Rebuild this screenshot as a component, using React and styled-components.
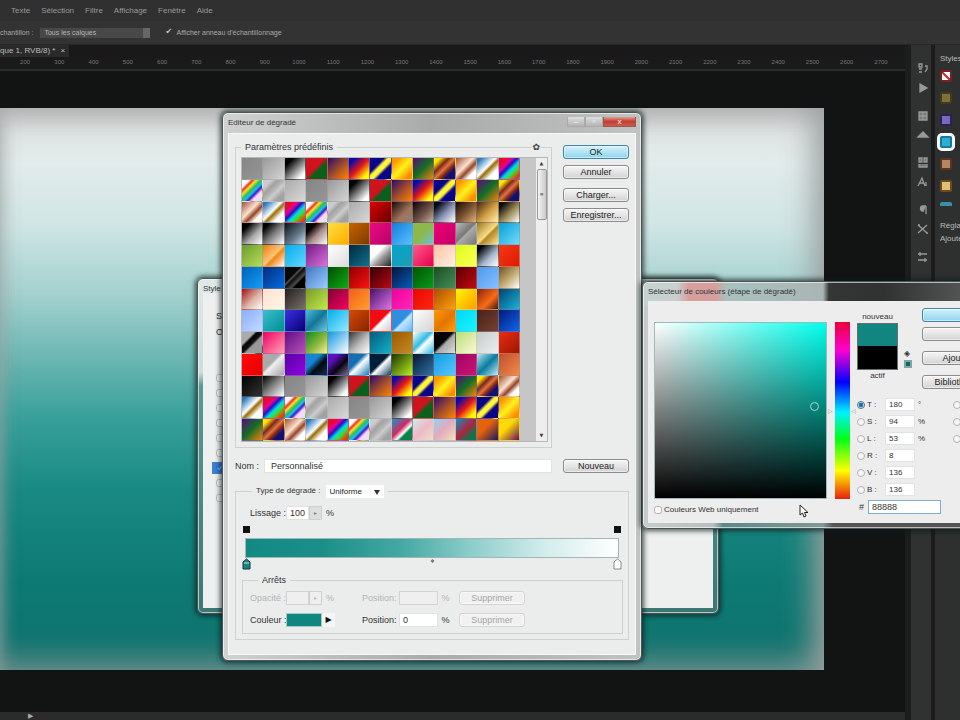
import React, { Component } from 'react'
import styled, { createGlobalStyle } from 'styled-components'

const GlobalStyle = createGlobalStyle`
    * {
        box-sizing: border-box;
    }
    body {
        margin: 0;
        background: #131514;
        overflow: hidden;
    }
    body, button, input, select {
        font-family: "Liberation Sans", Arial, sans-serif;
        font-size: 9px;
        line-height: 12px;
    }
`

/* ---------- application shell ---------- */

const Shell = styled.div`
    position: relative;
    display: flex;
    flex-direction: column;
    height: 100vh;
    overflow: hidden;
    color: #a9a9a9;
`

const MenuBar = styled.nav`
    display: flex;
    gap: 11px;
    height: 21px;
    padding: 5px 11px;
    background: #303030;
    font-size: 8px;
    a {
        color: #999;
        text-decoration: none;
    }
`

const OptionsBar = styled.div`
    display: flex;
    align-items: center;
    height: 24px;
    background: #333;
    border-bottom: 1px solid #262626;
    font-size: 7px;
    white-space: nowrap;
`

const SampleLabel = styled.label`
    display: flex;
    align-items: center;
    gap: 7px;
    font-size: 7px;
`

const DarkSelect = styled.select`
    appearance: none;
    width: 110px;
    height: 10px;
    padding: 0 4px;
    border: 0;
    background: linear-gradient(90deg, #484848 94%, #666 94%);
    color: #b5b5b5;
    font-size: 7px;
    line-height: 10px;
`

const RingLabel = styled.label`
    display: flex;
    align-items: center;
    gap: 3px;
    margin-left: 15px;
`

const RingCheck = styled.input`
    appearance: none;
    width: 8px;
    height: 10px;
    margin: 0;
    &:checked::before {
        content: "✔";
        display: block;
        color: #c5c5c5;
        font-family: "DejaVu Sans", sans-serif;
        font-size: 8px;
        line-height: 8px;
    }
`

const Work = styled.div`
    display: flex;
    flex: 1;
    min-height: 0;
`

const Document = styled.main`
    display: flex;
    flex-direction: column;
    flex: 1;
    min-width: 0;
`

const TabRow = styled.div`
    display: flex;
    height: 12px;
    background: #191919;
`

const Tab = styled.div`
    display: flex;
    gap: 5px;
    padding-right: 4px;
    background: #2a2a2a;
    color: #bbb;
    font-size: 8px;
    white-space: nowrap;
`

const Ruler = styled.div`
    display: flex;
    height: 14px;
    padding: 0 7px 0 8px;
    background: #1a1a1a;
    border-bottom: 2px solid #2c2b2b;
    color: #777;
    font-size: 6px;
    span {
        flex: 1;
        text-align: center;
        line-height: 10px;
    }
`

const Stage = styled.div`
    flex: 1;
    min-height: 0;
    padding: 37px 81px 42px 0;
    background: #121414;
`

const Artwork = styled.div`
    height: 100%;
    background: linear-gradient(180deg, #dedfdf 0, #e3ebeb 10%, #cfe5e4 21%, #9fcfcc 34%, #69b5b1 45%, #39a09a 55%, #198a83 68%, #0e7a74 84%, #0f716c 100%);
    box-shadow: inset -26px 0 28px -12px rgba(155, 160, 160, 0.8), inset 0 22px 26px -12px #b0b0b0,
        inset 0 -26px 28px -12px rgba(115, 145, 143, 0.75), inset 14px 0 18px -14px rgba(160, 160, 160, 0.7);
`

const StatusBar = styled.div`
    height: 8px;
    padding-left: 28px;
    background: #2b2b2b;
    color: #aaa;
    font-size: 7px;
    line-height: 8px;
`

const IconStrip = styled.aside`
    display: flex;
    flex-direction: column;
    align-items: center;
    width: 30px;
    padding: 17px 0 0 4px;
    border-left: 6px solid #1c1d1d;
    border-right: 4px solid #1c1c1c;
    background: #303131;
    svg {
        width: 14px;
        height: 14px;
        margin-bottom: 5px;
    }
    svg:nth-child(even) {
        margin-bottom: 14px;
    }
`

const StylePanel = styled.aside`
    width: 25px;
    padding: 8px 0 0 5px;
    background: #2e2f2f;
    color: #bbb;
    font-size: 8px;
    line-height: 11px;
    white-space: nowrap;
    overflow: hidden;
`

const StyleTiles = styled.div`
    display: flex;
    flex-direction: column;
    gap: 10px;
    margin: 6px 0;
`

const StyleTile = styled.div`
    width: 12px;
    height: 12px;
    border: ${p => (p.$rim ? `2px solid ${p.$rim}` : 0)};
    background: ${p => p.$fill};
    outline: ${p => (p.$on ? '3px solid #f4fcff' : 0)};
    border-radius: 2px;
`

const PanelNote = styled.div`
    margin-top: ${p => p.$gap || 0}px;
`

/* ---------- windows ---------- */

const Frame = styled.section`
    position: absolute;
    left: ${p => p.$left}px;
    top: ${p => p.$top}px;
    width: ${p => p.$width}px;
    border: 1px solid #4c5554;
    border-radius: 6px;
    background: ${p => p.$skin};
    box-shadow: inset 0 0 0 1px rgba(255, 255, 255, 0.6), 0 0 5px 2px rgba(10, 25, 24, 0.7);
    padding: 0 5px 5px;
    color: #333;
    white-space: nowrap;
`

const TitleBar = styled.header`
    display: flex;
    justify-content: space-between;
    height: ${p => p.$height}px;
    padding-top: 4px;
    h2 {
        margin: 0;
        font-size: 8px;
        font-weight: normal;
        line-height: 12px;
    }
`

const Caption = styled.div`
    display: flex;
    height: 10px;
    button {
        width: 18px;
        padding: 0;
        border: 1px solid #aaa;
        border-top: 0;
        background: linear-gradient(#ddd, #b5b5b5);
        color: #fff;
        font-size: 8px;
        line-height: 8px;
    }
    button:last-child {
        width: 33px;
        background: linear-gradient(#dc9c94, #c33d31 50%, #cf5a4b);
        border-color: #9a5a54;
    }
`

const Button = styled.button`
    display: block;
    width: 100%;
    height: 14px;
    margin-top: ${p => p.$gap || 0}px;
    padding: 0;
    border: 1px solid ${p => (p.$primary ? '#3f87a1' : '#8c8c8c')};
    border-radius: 3px;
    background: ${p => (p.$primary ? 'linear-gradient(#d5f1fb, #8fd4ec)' : 'linear-gradient(#f6f6f6, #d3d3d3)')};
    box-shadow: inset 0 0 0 1px rgba(255, 255, 255, 0.5);
    color: #222;
    line-height: 11px;
    &:disabled {
        border-color: #d4d4d4;
        background: #f1f1f1;
        color: #a5a5a5;
    }
`

const Field = styled.input`
    width: ${p => p.$width}px;
    height: ${p => p.$height || 14}px;
    padding: 0 ${p => p.$pad || 3}px;
    border: 1px solid #e0e3e3;
    background: #fff;
    color: #333;
    &:disabled {
        border-color: #d2d2d2;
        background: #efefef;
    }
`

const Group = styled.fieldset`
    position: relative;
    min-width: 0;
    margin: ${p => p.$margin || 0};
    padding: ${p => p.$padding};
    border: 1px solid #cfd0d0;
`

const Legend = styled.legend`
    display: flex;
    height: 12px;
    margin-left: ${p => p.$indent || 0}px;
    padding: 0 4px;
    line-height: 12px;
    label {
        font-size: 8px;
    }
`

const EditorBody = styled.div`
    padding: 7px 6px 14px;
    background: #ebecec;
    border: 1px solid #f8f8f8;
`

const Columns = styled.div`
    display: flex;
    gap: 11px;
    > :first-child {
        flex: 1;
    }
    > :last-child {
        width: 66px;
    }
`

const ButtonStack = styled.div`
    padding-top: 4px;
`

const Gear = styled.button`
    position: absolute;
    right: 11px;
    top: -12px;
    padding: 0;
    border: 0;
    background: #ebecec;
    color: #444;
    font-family: "DejaVu Sans", sans-serif;
    font-size: 9px;
`

const PresetBox = styled.div`
    display: flex;
    height: 285px;
    border: 1px solid #b7b7b7;
    background: #c6c6c6;
`

const Swatches = styled.div`
    display: grid;
    grid-template-columns: repeat(13, 1fr);
    grid-template-rows: repeat(13, 1fr);
    width: 278px;
`

const Swatch = styled.div`
    border-right: 1px solid rgba(190, 190, 190, 0.4);
    border-bottom: 1px solid rgba(190, 190, 190, 0.4);
    background: ${p => `linear-gradient(135deg, ${p.$stops})`};
`

const Scroll = styled.div`
    display: flex;
    flex-direction: column;
    align-items: center;
    width: 11px;
    margin-left: auto;
    background: #eee;
    color: #444;
    font-family: "DejaVu Sans", sans-serif;
    font-size: 5px;
    line-height: 11px;
    span:last-child {
        margin-top: auto;
    }
`

const Thumb = styled.div`
    width: 10px;
    height: 51px;
    border: 1px solid #999;
    border-radius: 2px;
    background: linear-gradient(90deg, #f4f4f4, #c8c8c8);
    text-align: center;
    line-height: 48px;
`

const NameRow = styled.div`
    display: flex;
    align-items: center;
    margin-top: 11px;
    label {
        width: 29px;
    }
    input {
        flex: 1;
    }
    div {
        width: 66px;
        margin-left: 11px;
    }
`

const LightSelect = styled.select`
    appearance: none;
    width: 58px;
    height: 13px;
    margin-left: 5px;
    padding: 0 4px;
    border: 0;
    background: #fff url("data:image/svg+xml,%3Csvg xmlns='http://www.w3.org/2000/svg' width='6' height='5'%3E%3Cpath d='M0 0h6L3 5z' fill='%23333'/%3E%3C/svg%3E") no-repeat 48px 5px;
    color: #222;
    font-size: 8px;
`

const SmoothRow = styled.div`
    display: flex;
    align-items: center;
    height: 14px;
    margin: 0 8px 5px;
    label {
        width: 36px;
    }
`

const Stepper = styled.button`
    width: 13px;
    height: 14px;
    margin-right: 4px;
    padding: 0;
    border: 1px solid #cfcfcf;
    background: #dedede;
    color: ${p => (p.disabled ? '#bbb' : '#888')};
    font-size: 6px;
    &:disabled {
        background: #efefef;
    }
`

const StopRow = styled.div`
    display: flex;
    justify-content: space-between;
    height: ${p => p.$height}px;
    margin: 0 1px 0 0;
    svg {
        width: 9px;
        height: 12px;
    }
`

const Ramp = styled.div`
    height: 20px;
    margin: 0 4px 0 3px;
    border: 1px solid #a3b5b4;
    background: linear-gradient(90deg, #128a84, #1b8e88 20%, #45a9a3 42%, #8accc9 60%, #d2eceb 80%, #fff);
`

const StopGrid = styled.div`
    display: grid;
    grid-template-columns: 36px 76px 37px 40px 20px 66px;
    grid-auto-rows: 14px;
    row-gap: 8px;
    align-items: center;
`

const Inline = styled.div`
    display: flex;
    align-items: center;
`

const Tag = styled.label`
    color: ${p => (p.$dim ? '#b4b4b4' : '#333')};
`

const ColorWell = styled.button`
    width: 36px;
    height: 14px;
    padding: 0;
    border: 1px solid #a7cbc9;
    background: #118680;
`

const Flyout = styled.button`
    width: 13px;
    height: 14px;
    padding: 0;
    border: 0;
    background: #f5f5f5;
    color: #111;
    font-family: "DejaVu Sans", sans-serif;
    font-size: 8px;
`

/* ---------- layer style window ---------- */

const StyleBody = styled.div`
    height: 315px;
    padding: 17px 11px 0 13px;
    background: #eeefef;
`

const BlendOptions = styled.div`
    margin-top: 4px;
`

const Effects = styled.div`
    display: flex;
    flex-direction: column;
    gap: 3px;
    margin-top: 34px;
    label {
        display: flex;
        gap: 8px;
        height: 12px;
    }
    input {
        width: 8px;
        height: 8px;
        margin: 2px 0;
        opacity: 0.4;
    }
    label:nth-child(7) {
        margin-left: -4px;
        padding-left: 4px;
        background: #3f7fcf;
        color: #fff;
    }
`

/* ---------- colour picker ---------- */

const PickerBody = styled.div`
    display: flex;
    height: 222px;
    padding: 7px 6px 0;
    background: #ecedec;
`

const FieldColumn = styled.div`
    width: 173px;
    padding-top: 14px;
    label {
        display: flex;
        align-items: center;
        gap: 2px;
        margin-top: 5px;
        font-size: 8px;
    }
    label input {
        width: 8px;
        height: 8px;
        margin: 0;
        opacity: 0.5;
    }
`

const ColorField = styled.div`
    position: relative;
    height: 177px;
    border: 1px solid #9bb;
    background: linear-gradient(180deg, transparent, #000), linear-gradient(90deg, #fff, #00ffec);
`

const Marker = styled.div`
    position: absolute;
    left: 155px;
    top: 79px;
    width: 9px;
    height: 9px;
    border: 1px solid #a5d6d3;
    border-radius: 50%;
`

const Hue = styled.div`
    display: flex;
    align-items: center;
    justify-content: space-between;
    width: 28px;
    height: 177px;
    margin: 14px 0 0 1px;
    color: #999;
    font-size: 6px;
`

const HueBar = styled.div`
    width: 15px;
    height: 177px;
    background: linear-gradient(#e8003a, #ff00d0 16%, #0000ff 34%, #00f0ff 51%, #00ff18 66%, #ffff00 84%, #e8200c);
`

const Values = styled.div`
    padding-left: 1px;
    flex: 1;
`

const PickerTop = styled.div`
    display: flex;
    height: 90px;
`

const Compare = styled.div`
    width: 41px;
    padding-top: 3px;
    font-size: 8px;
    text-align: center;
    div {
        height: 47px;
        background: linear-gradient(#118680 48%, #000 48%);
        border: 1px solid #676f6e;
    }
`

const Gamut = styled.div`
    width: 24px;
    padding: 41px 7px 0 6px;
    font-family: "DejaVu Sans", sans-serif;
    font-size: 8px;
    line-height: 9px;
    div {
        width: 8px;
        height: 8px;
        margin-top: 2px;
        border: 2px solid #7ba9a7;
        background: #17615e;
    }
`

const PickerButtons = styled.div`
    width: 128px;
`

const ValueGrid = styled.div`
    display: grid;
    grid-template-columns: 10px 18px 30px 38px 14px 60px;
    grid-auto-rows: 13px;
    row-gap: 4px;
    align-items: center;
    font-size: 8px;
    input {
        font-size: 8px;
    }
    input[type="radio"] {
        width: 8px;
        height: 8px;
        margin: 0;
        accent-color: #2f6f9b;
    }
    input[type="radio"]:not(:checked) {
        opacity: 0.5;
    }
    span {
        padding-left: 3px;
    }
`

const HexRow = styled.label`
    display: flex;
    align-items: center;
    gap: 4px;
    margin-top: 4px;
    padding-left: 2px;
    input {
        border-color: #7fb0c8;
    }
`

const Pointer = styled.svg`
    position: absolute;
    left: 799px;
    top: 504px;
    width: 10px;
    height: 14px;
`

/* Gradient presets by name: the default set repeats through the list */
const G = {
    gy: '#858585, #969696',
    lg: '#999, #d4d4d4',
    bw: '#000 20%, #fff 85%',
    rg: '#d0121d 45%, #08601b 60%',
    vo: '#2c086c, #a85028 55%, #ff8500',
    bry: '#0909a8 15%, #e61717 50%, #ffff00 85%',
    byb: '#0a0588 34%, #fff53b 44%, #fff53b 56%, #0a0588 66%',
    oyo: '#ff9400 15%, #fff31c 50%, #ff8b00 85%',
    vgo: '#5c087e, #136e25 50%, #ff7d08',
    yvo: '#ffe500 15%, #7d281e 35%, #de7640 50%, #892714 63%, #111173 75%',
    cop: '#9c5033, #ffe1cf 42%, #954627 60%, #fff 78%',
    chr: '#2879bd 10%, #fff 45%, #9b6b05 55%, #fff 75%',
    spe: '#f0052d 20%, #e3009b 33%, #2312c2 45%, #00d9f0 58%, #37e136 70%, #f33a00 90%',
    rai: '#fff 18%, #f42b20 26%, #ffdf22 35%, #1fc25c 47%, #1fbded 56%, #391cc4 65%, #f7d9ff 75%',
    str: '#ccc 20%, #a2a2a2 35%, #b5b5b5 50%, #ccc 60%, #a2a2a2 80%',
}

const presets = [
    [G.gy, G.lg, G.bw, G.rg, G.vo, G.bry, G.byb, G.oyo, G.vgo, G.yvo, G.cop, G.chr, G.spe],
    [G.rai, G.str, '#aaa, #d8d8d8', G.gy, G.lg, G.bw, G.rg, G.vo, G.bry, G.byb, G.oyo, G.vgo, G.yvo],
    [G.cop, G.chr, G.spe, G.rai, G.str, '#aaa, #d8d8d8', '#e00000, #660000', '#150a05, #a1745b 60%, #8c8073', '#090303, #76584e 60%, #c3b1a8', '#020717 15%, #8993b1 55%, #fff', '#150800, #775031 50%, #e4b277', '#462307, #d5a348 55%, #fff0b5', '#0c0c0a 15%, #9a8a58 55%, #fff'],
    ['#000 20%, #aaa 60%, #fff', '#000 15%, #777 50%, #fff', '#071018, #65798a 60%, #cde0ed', '#0b0000 25%, #aa8c8c 55%, #fff', '#ffe03c, #ffad00', '#c96200, #7d3c00', '#f00787, #b50565', '#107ddc, #5bc0ff', '#8bba4a 50%, #6ebde4', '#f00076, #c30067', '#bbb, #777 47%, #aaa 52%, #777', '#9e7524, #f8dc82 50%, #b18628 58%, #ffe99b', '#00a0db, #75daf8'],
    ['#6d9c28, #b6dc5e', '#e77b00, #ffc47c 50%, #f28513 58%, #fff', '#00aeef, #62d4ff', '#731985, #d974dc', '#fff, #ddd', '#00283d, #13718e', '#fff 35%, #999 60%, #222', '#00a4d0, #229cb0', '#ff5b8c, #e8004b', '#ffc0a4, #fff2e2', '#d8ff18, #ffff57', '#000 15%, #a7b8ce 60%, #fff', '#f73818, #de1a00'],
    ['#0060b8, #159cf4', '#062d79, #006be2', '#080808 38%, #555 43%, #0c0c0c 50%, #4b4b4b 66%, #000 72%', '#3f77c6, #9cccff', '#004e00, #0cac16', '#8b0000, #ff1010', '#2d0008, #be0712', '#03143c, #075cba', '#005500, #079819', '#164f25, #488c56', '#580000, #c20713', '#4d99e9, #86bfff', '#6e5024, #bfa66d 50%, #fff'],
    ['#a31010, #ddb4a5 55%, #fff', '#ffe2cf, #fff6e7', '#242020, #787068', '#799d25, #c0ea4c', '#7f0030, #f50060', '#f55e17, #ff9e2a', '#481068, #dc74e7', '#ef009e, #ff27ba', '#e70700, #ff2611', '#a94f00, #ff9f0a', '#fff600, #ff9d00', '#8c1d0c, #fa6d18 60%, #3c1610', '#00446f, #19b2da'],
    ['#8aaeff, #c4dbff', '#3abfd0, #008e94', '#3b30e8, #080070', '#47bddb, #137596 50%, #6acbe2', '#00adeb, #97e9ff', '#d94b06, #852300', '#f20b13 48%, #fff 56%, #cacaca', '#308ee1 50%, #c4e6ff 58%, #65b8f1', '#fff, #d4d4d4', '#ff9a00, #e47400 55%, #ffa000', '#00d5f3, #18f7ff', '#4b211a, #744132', '#001977, #1366ef'],
    ['#aaa 30%, #050505 38%, #111 52%, #999 60%', '#ef0064, #ffa2b5', '#630d85, #b450b8', '#078b20, #89b73c 55%, #fff199', '#1096e3, #fff', '#333, #bbb 55%, #fff', '#065c7d, #10b0ca', '#9b5900, #c78a23', '#fff, #2dbbe5 45%, #fff 58%, #29bae7', '#050505 45%, #aaa 55%, #ddd', '#b5de79, #fff8d6', '#c4cccc, #eee', '#ec2a14, #9a1900'],
    ['#ff0b08, #e60000', '#aaa 40%, #eee 50%, #a5a5a5', '#5c00a8, #8f05de', '#1684d4 35%, #03090f 60%, #172c52', '#5a12bd 25%, #08040d 60%, #77718e', '#126fb2 38%, #fff 53%, #1178b9', '#001e36 45%, #fff 55%, #0d3a57', '#173500, #b9ed22', '#07152e, #2f73aa', '#119dde, #58c6ff', '#9e075d, #cf1178', '#bde7f1, #087ba0 50%, #c9ebf3', '#be4f2c, #f38a4a'],
    ['#000, #333', '#000, #888 50%, #fff', G.gy, G.lg, G.bw, G.rg, G.vo, G.bry, G.byb, G.oyo, G.vgo, G.yvo, G.cop],
    [G.chr, G.spe, G.rai, G.str, '#aaa, #d8d8d8', G.gy, G.lg, G.bw, G.rg, G.vo, G.bry, G.byb, G.oyo],
    [G.vgo, G.yvo, G.cop, G.chr, G.spe, G.rai, G.str, '#1599cf, #ce2a60 45%, #fff 62%, #07834a 70%', '#ccf0e0, #efb8c8 50%, #e5e2c4', '#8fd5ec, #e5a9bf 48%, #eee4b5', '#138eb5, #ac2543 50%, #10734b 78%', '#e7620a 40%, #141963', '#ffda00 40%, #640d65'],
]

const ticks = Array.from({ length: 26 }, (_, i) => (i + 2) * 100)

const effects = ['Biseautage', 'Contour', 'Texture', 'Contour', 'Ombre', 'Lueur', 'Incrustation', 'Satin', 'Motif']

const Icon = ({ children }) => (
    <svg viewBox="0 0 14 14" fill="none" stroke="#999" strokeWidth="1.3">{children}</svg>
)

const DockIcons = () => (
    <IconStrip>
        <Icon><path d="M3 2h3v3H3zM3 7h3M3 10h3M9 4h2v3L9 10" /></Icon>
        <Icon><path d="M4 3l7 4-7 4z" fill="#999" /></Icon>
        <Icon><path d="M3 3h8v8H3zM3 7h8M7 3v8" fill="#777" /></Icon>
        <Icon><path d="M2 9l5-5 5 5zM5 7h4" fill="#999" /></Icon>
        <Icon><path d="M3 2h3v4H3zM8 2h3v4H8zM3 8v3h8V8" fill="#777" /></Icon>
        <Icon><path d="M2 11L6 3l3 8M4 8h4M10 7v4" /></Icon>
        <Icon><path d="M10 3v8M10 3H7a2 2 0 0 0 0 5h1" fill="#999" /></Icon>
        <Icon><path d="M2 3l9 8M2 11l9-8M2 3h2M10 11h2" /></Icon>
        <Icon><path d="M2 4h9M2 10h9M4 2v4M9 8v4" /></Icon>
    </IconStrip>
)

class GradientEditor extends Component {
    render() {
        return (
            <Frame $left={222} $top={112} $width={420} $skin="linear-gradient(90deg, #d0d2d2, #a9abab 50%, #c1c3c3)">
                <TitleBar $height={20}>
                    <h2>Editeur de dégradé</h2>
                    <Caption>
                        <button aria-label="Réduire">–</button>
                        <button aria-label="Agrandir">▫</button>
                        <button aria-label="Fermer">x</button>
                    </Caption>
                </TitleBar>
                <EditorBody>
                    <Columns>
                        <Group $padding="4px 3px 5px 5px">
                            <Legend>Paramètres prédéfinis</Legend>
                            <Gear aria-label="Options">✿</Gear>
                            <PresetBox>
                                <Swatches>
                                    {presets.flat().map((stops, i) => <Swatch key={i} $stops={stops} />)}
                                </Swatches>
                                <Scroll>
                                    <span>▲</span>
                                    <Thumb>≡</Thumb>
                                    <span>▼</span>
                                </Scroll>
                            </PresetBox>
                        </Group>
                        <ButtonStack>
                            <Button $primary>OK</Button>
                            <Button $gap={6}>Annuler</Button>
                            <Button $gap={9}>Charger...</Button>
                            <Button $gap={6}>Enregistrer...</Button>
                        </ButtonStack>
                    </Columns>
                    <NameRow>
                        <label htmlFor="nom">Nom :</label>
                        <Field id="nom" $pad={6} defaultValue="Personnalisé" />
                        <div><Button>Nouveau</Button></div>
                    </NameRow>
                    <Group $margin="12px 0 0" $padding="9px 5px 5px 6px">
                        <Legend $indent={10}>
                            <label htmlFor="type">Type de dégradé :</label>
                            <LightSelect id="type"><option>Uniforme</option></LightSelect>
                        </Legend>
                        <SmoothRow>
                            <label htmlFor="lissage">Lissage :</label>
                            <Field id="lissage" $width={23} defaultValue="100" />
                            <Stepper aria-label="Ajuster">▸</Stepper>
                            %
                        </SmoothRow>
                        <StopRow $height={13}>
                            <svg viewBox="0 0 9 12"><path d="M1 1h7v7H1z" fill="#111" /></svg>
                            <svg viewBox="0 0 9 12"><path d="M1 1h7v7H1z" fill="#111" /></svg>
                        </StopRow>
                        <Ramp />
                        <StopRow $height={14}>
                            <svg viewBox="0 0 9 12"><path d="M1 4l3.500-3L8 4v7H1z" fill="#118680" stroke="#234" /><path d="M2 5h5" stroke="#ddd" /></svg>
                            <svg viewBox="0 0 9 12"><path d="M4.500 1l2 2-2 2-2-2z" fill="#777" /></svg>
                            <svg viewBox="0 0 9 12"><path d="M1 4l3.500-3L8 4v7H1z" fill="#fff" stroke="#888" /></svg>
                        </StopRow>
                        <Group $margin="2px 0 0" $padding="5px 7px 6px">
                            <Legend $indent={8}>Arrêts</Legend>
                            <StopGrid>
                                <Tag $dim htmlFor="opacite">Opacité :</Tag>
                                <Inline>
                                    <Field id="opacite" $width={23} disabled />
                                    <Stepper disabled aria-label="Ajuster">▸</Stepper>
                                    <Tag as="span" $dim>%</Tag>
                                </Inline>
                                <Tag $dim htmlFor="pos1">Position:</Tag>
                                <Field id="pos1" $width={39} disabled />
                                <Tag as="span" $dim>&nbsp;%</Tag>
                                <Button disabled>Supprimer</Button>
                                <Tag htmlFor="couleur">Couleur :</Tag>
                                <Inline>
                                    <ColorWell id="couleur" />
                                    <Flyout aria-label="Choisir">▶</Flyout>
                                </Inline>
                                <Tag htmlFor="pos2">Position:</Tag>
                                <Field id="pos2" $width={39} defaultValue="0" />
                                <span>&nbsp;%</span>
                                <Button disabled>Supprimer</Button>
                            </StopGrid>
                        </Group>
                    </Group>
                </EditorBody>
            </Frame>
        )
    }
}

const ChannelRow = ({ name, value, unit, checked, lab }) => (
    <React.Fragment>
        <input type="radio" name="composante" id={'r' + name} defaultChecked={checked} />
        <label htmlFor={'r' + name}>{name} :</label>
        <Field $width={30} $height={13} aria-label={name} defaultValue={value} />
        <span>{unit}</span>
        {lab ? <input type="radio" name="composante" id={'l' + lab} /> : <i />}
        {lab ? <label htmlFor={'l' + lab}>{lab} :</label> : <i />}
    </React.Fragment>
)

const glass = `linear-gradient(90deg, #c3d3d1 0, #c9cfcd 34px, #d79e9e 46px, #d79e9e 72px, #a9c1be 84px,
    #a9b5b4 180px, #343636 186px, #303232 240px, #5c5e5e 340px) 0 0 / 100% 24px no-repeat,
    linear-gradient(90deg, #c5cccb 0, #b9c1c0 70px, #5d8a87 80px, #7f9997 180px, #555 190px)`

class ColorPicker extends Component {
    render() {
        return (
            <Frame $left={642} $top={281} $width={420} $skin={glass}>
                <TitleBar $height={19}>
                    <h2>Sélecteur de couleurs (étape de dégradé)</h2>
                </TitleBar>
                <PickerBody>
                    <FieldColumn>
                        <ColorField><Marker /></ColorField>
                        <label><input type="checkbox" />Couleurs Web uniquement</label>
                    </FieldColumn>
                    <Hue>▷<HueBar />◁</Hue>
                    <Values>
                        <PickerTop>
                            <Compare>nouveau<div />actif</Compare>
                            <Gamut>◈<div /></Gamut>
                            <PickerButtons>
                                <Button $primary>OK</Button>
                                <Button $gap={5}>Annuler</Button>
                                <Button $gap={10}>Ajouter aux nuanciers</Button>
                                <Button $gap={10}>Bibliothèques de couleurs</Button>
                            </PickerButtons>
                        </PickerTop>
                        <ValueGrid>
                            <ChannelRow name="T" value="180" unit="°" lab="L" checked />
                            <ChannelRow name="S" value="94" unit="%" lab="a" />
                            <ChannelRow name="L" value="53" unit="%" lab="b" />
                            <ChannelRow name="R" value="8" />
                            <ChannelRow name="V" value="136" />
                            <ChannelRow name="B" value="136" />
                        </ValueGrid>
                        <HexRow># <Field $width={73} defaultValue="88888" /></HexRow>
                    </Values>
                </PickerBody>
            </Frame>
        )
    }
}

class LayerStyle extends Component {
    render() {
        return (
            <Frame $left={197} $top={278} $width={522} $skin="linear-gradient(#dfe9e8, #cbdcda 28%, #579a96 32%, #3d7773)">
                <TitleBar $height={14}><h2>Style</h2></TitleBar>
                <StyleBody>
                    Styles
                    <BlendOptions>Options</BlendOptions>
                    <Effects>
                        {effects.map((name, i) => (
                            <label key={i}><input type="checkbox" aria-label={name} defaultChecked={i === 6} /></label>
                        ))}
                    </Effects>
                </StyleBody>
            </Frame>
        )
    }
}

export default class App extends Component {
    render() {
        return (
            <Shell>
                <GlobalStyle />
                <MenuBar>
                    {['Texte', 'Sélection', 'Filtre', 'Affichage', 'Fenêtre', 'Aide'].map(name => (
                        <a key={name} href="#menu">{name}</a>
                    ))}
                </MenuBar>
                <OptionsBar>
                    <SampleLabel>
                        chantillon :
                        <DarkSelect><option>Tous les calques</option></DarkSelect>
                    </SampleLabel>
                    <RingLabel>
                        <RingCheck type="checkbox" defaultChecked />
                        Afficher anneau d'échantillonnage
                    </RingLabel>
                </OptionsBar>
                <Work>
                    <Document>
                        <TabRow><Tab><span>que 1, RVB/8) *</span><span>×</span></Tab></TabRow>
                        <Ruler>{ticks.map(n => <span key={n}>{n}</span>)}</Ruler>
                        <Stage><Artwork /></Stage>
                        <StatusBar>▶</StatusBar>
                    </Document>
                    <DockIcons />
                    <StylePanel>
                        Styles
                        <StyleTiles>
                            <StyleTile $fill="linear-gradient(45deg, #fff 42%, #c33 42%, #c33 58%, #fff 58%)" $rim="#762222" />
                            <StyleTile $fill="#7c7136" $rim="#453b19" />
                            <StyleTile $fill="#7b68bd" $rim="#292251" />
                            <StyleTile $fill="#2bafd3" $rim="#157b9c" $on />
                            <StyleTile $fill="#b48862" $rim="#58371e" />
                            <StyleTile $fill="#dfbf7a" $rim="#6d4b1a" />
                            <StyleTile $fill="linear-gradient(#3a8ea6 30%, #2e2f2f 30%)" />
                        </StyleTiles>
                        <PanelNote>Réglages</PanelNote>
                        <PanelNote $gap={2}>Ajouter un réglage</PanelNote>
                    </StylePanel>
                </Work>
                <LayerStyle />
                <GradientEditor />
                <ColorPicker />
                <Pointer viewBox="0 0 10 14">
                    <path d="M1 1v10l2.500-2L5 13l2-1-1.500-3.500H9z" fill="#fff" stroke="#222" />
                </Pointer>
            </Shell>
        )
    }
}
